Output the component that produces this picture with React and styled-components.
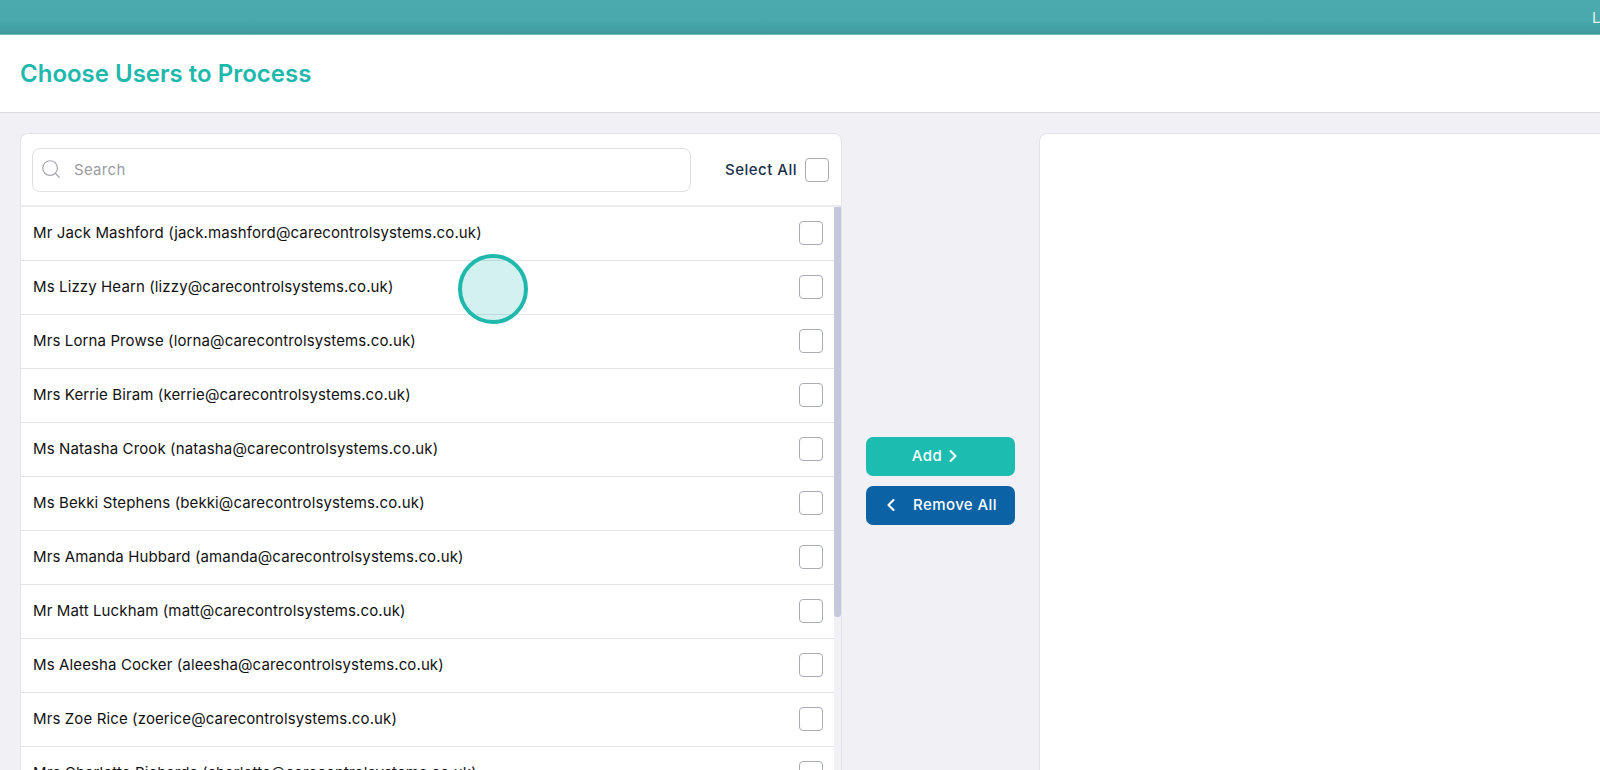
import React from 'react'
import styled, { createGlobalStyle } from 'styled-components'
import { Search, ChevronLeft, ChevronRight } from 'lucide-react'

const GlobalStyle = createGlobalStyle`
  html, body {
    margin: 0;
    height: 770px;
    overflow: hidden;
    background: #f0f0f5;
    font-family: Inter, "Open Sans", sans-serif;
  }
  * {
    box-sizing: border-box;
  }
`;

const Page = styled.div`
  position: relative;
  width: 1881px;
  height: 770px;
  overflow: hidden;
`;

const TopBar = styled.div`
  height: 35px;
  padding-left: 1592px;
  display: flex;
  align-items: center;
  background: linear-gradient(#4aaaae 0%, #49a9ad 55%, #3f9a9e 96%, #8fcfd0 100%);
  color: #e4f4f4;
  font-size: 15px;
  white-space: nowrap;
`;

const TitleBar = styled.div`
  height: 78px;
  padding-left: 20px;
  display: flex;
  align-items: center;
  background: #fff;
  border-bottom: 1px solid #dcdce2;
`;

const Title = styled.h1`
  margin: 0;
  color: #1fb8ad;
  font-size: 24px;
  font-weight: 600;
`;

const Content = styled.div`
  display: grid;
  grid-template-columns: 822px 149px 822px;
  gap: 24px;
  padding: 20px;
`;

const Card = styled.div`
  height: 696px;
  background: #fff;
  border: 1px solid #e3e3ea;
  border-radius: 8px;
  overflow: hidden;
  display: flex;
  flex-direction: column;
`;

const CardHeader = styled.div`
  height: 73px;
  flex: none;
  padding: 14px 12px 0 11px;
  display: flex;
  align-items: flex-start;
  border-bottom: 2px solid #ebebf0;
`;

const SearchBox = styled.div`
  width: 659px;
  height: 44px;
  padding: 0 0 2px 7px;
  display: flex;
  align-items: center;
  gap: 12px;
  border: 1px solid #dedee5;
  border-radius: 8px;
  color: #9a9ba3;
  font-size: 15px;
  letter-spacing: 0.3px;
`;

const SelectAll = styled.label`
  margin-left: auto;
  height: 44px;
  display: flex;
  align-items: center;
  gap: 8px;
  color: #1b2f4b;
  font-size: 15px;
  font-weight: 500;
  letter-spacing: 0.5px;
`;

const SelectAllText = styled.span`
  margin-top: -2px;
`;

const Checkbox = styled.span`
  width: 24px;
  height: 24px;
  flex: none;
  background: #fff;
  border: 1px solid #a9abb5;
  border-radius: 4px;
`;

const ListArea = styled.div`
  flex: 1;
  min-height: 0;
  display: flex;
`;

const UserList = styled.div`
  flex: 1;
  min-width: 0;
`;

const UserRow = styled.div`
  height: 54px;
  padding: 0 11px 2px 12px;
  display: flex;
  align-items: center;
  justify-content: space-between;
  border-bottom: 1px solid #e3e3ea;
  color: #111;
  font-size: 15px;
  letter-spacing: 0.12px;
`;

const ScrollTrack = styled.div`
  width: 7px;
  flex: none;
  background: #f1f1f6;
`;

const ScrollThumb = styled.div`
  height: 410px;
  background: #c5c8dc;
  border-radius: 0 0 3px 3px;
`;

const Actions = styled.div`
  display: flex;
  flex-direction: column;
  justify-content: center;
  gap: 10px;
  height: 696px;
`;

const ActionButton = styled.button`
  height: 39px;
  padding: 0 ${props => props.$endSpace}px 2px 0;
  display: flex;
  align-items: center;
  justify-content: center;
  gap: ${props => props.$gap}px;
  border: none;
  border-radius: 7px;
  background: ${props => props.$bg};
  color: #fff;
  font-family: inherit;
  font-size: 15px;
  font-weight: 500;
  letter-spacing: 0.4px;
`;

const ClickMarker = styled.div`
  position: absolute;
  left: 458px;
  top: 254px;
  width: 70px;
  height: 70px;
  border-radius: 50%;
  border: 4px solid #1fb8ad;
  background: rgba(31, 184, 173, 0.2);
`;

const users = [
  'Mr Jack Mashford (jack.mashford@carecontrolsystems.co.uk)',
  'Ms Lizzy Hearn (lizzy@carecontrolsystems.co.uk)',
  'Mrs Lorna Prowse (lorna@carecontrolsystems.co.uk)',
  'Mrs Kerrie Biram (kerrie@carecontrolsystems.co.uk)',
  'Ms Natasha Crook (natasha@carecontrolsystems.co.uk)',
  'Ms Bekki Stephens (bekki@carecontrolsystems.co.uk)',
  'Mrs Amanda Hubbard (amanda@carecontrolsystems.co.uk)',
  'Mr Matt Luckham (matt@carecontrolsystems.co.uk)',
  'Ms Aleesha Cocker (aleesha@carecontrolsystems.co.uk)',
  'Mrs Zoe Rice (zoerice@carecontrolsystems.co.uk)',
  'Mrs Charlotte Richards (charlotte@carecontrolsystems.co.uk)',
];

export default function App() {
  return (
    <Page>
      <GlobalStyle />
      <TopBar>Logged in</TopBar>
      <TitleBar>
        <Title>Choose Users to Process</Title>
      </TitleBar>
      <Content>
        <Card>
          <CardHeader>
            <SearchBox>
              <Search size={22} strokeWidth={1.3} color="#a5a6ae" />
              Search
            </SearchBox>
            <SelectAll>
              <SelectAllText>Select All</SelectAllText>
              <Checkbox />
            </SelectAll>
          </CardHeader>
          <ListArea>
            <UserList>
              {users.map(user => (
                <UserRow key={user}>
                  {user}
                  <Checkbox />
                </UserRow>
              ))}
            </UserList>
            <ScrollTrack>
              <ScrollThumb />
            </ScrollTrack>
          </ListArea>
        </Card>
        <Actions>
          <ActionButton $bg="#1cbcb0" $gap={1} $endSpace={6}>
            Add <ChevronRight size={20} strokeWidth={2.5} />
          </ActionButton>
          <ActionButton $bg="#0b63a5" $gap={12} $endSpace={3}>
            <ChevronLeft size={20} strokeWidth={2.5} /> Remove All
          </ActionButton>
        </Actions>
        <Card />
      </Content>
      <ClickMarker />
    </Page>
  )
}
